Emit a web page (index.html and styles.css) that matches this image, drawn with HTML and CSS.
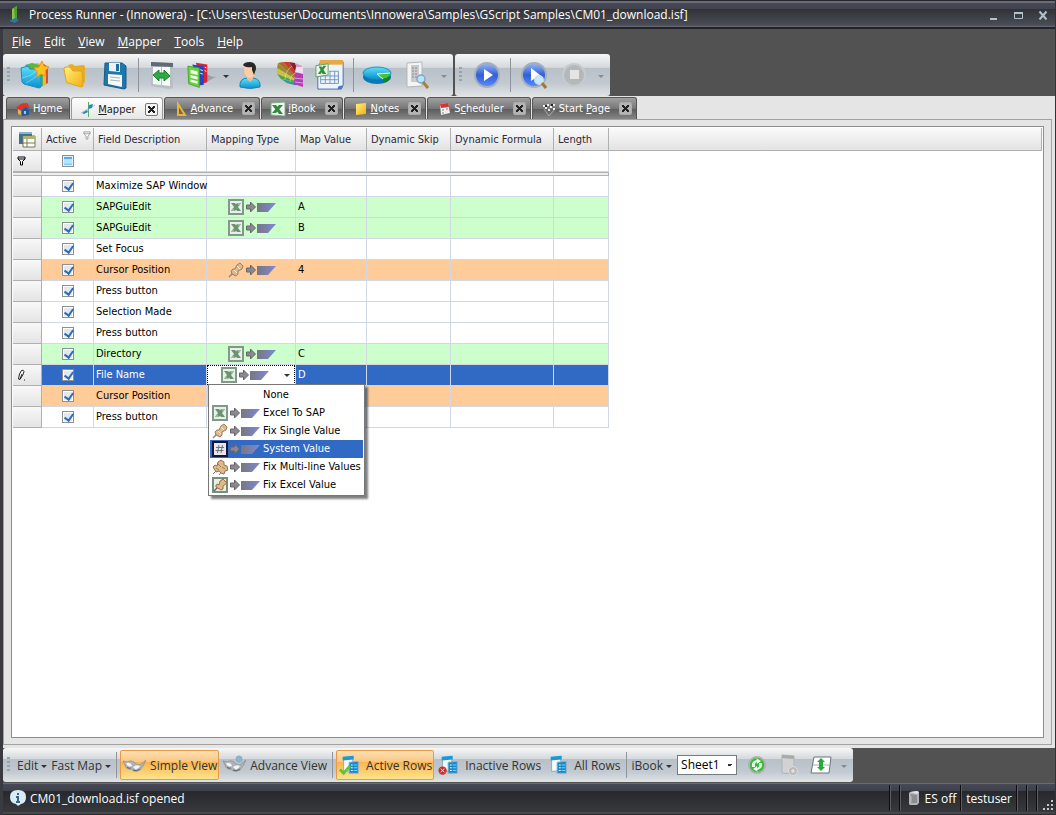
FILE: index.html
```html
<!DOCTYPE html>
<html lang="en">
<head>
    <meta charset="UTF-8">
    <meta name="viewport" content="width=device-width, initial-scale=1.0">
    <title>Process Runner</title>
    <link rel="stylesheet" href="styles.css">
</head>
<body>

<!-- shared icons -->
<svg class="sprite" aria-hidden="true">
    <defs>
        <linearGradient id="g-cyan" x1="0" y1="0" x2="0" y2="1"><stop offset="0" stop-color="#5fe0f8"/><stop offset="1" stop-color="#0b8fd0"/></linearGradient>
        <linearGradient id="g-yellow" x1="0" y1="0" x2="1" y2="1"><stop offset="0" stop-color="#fff27a"/><stop offset="1" stop-color="#f4ac14"/></linearGradient>
        <linearGradient id="g-blue" x1="0" y1="0" x2="0" y2="1"><stop offset="0" stop-color="#9db8f2"/><stop offset="0.5" stop-color="#2f5fd8"/><stop offset="1" stop-color="#5b8cff"/></linearGradient>
        <linearGradient id="g-flow" x1="0" y1="0" x2="1" y2="0"><stop offset="0" stop-color="#77777f"/><stop offset="1" stop-color="#7f88d8"/></linearGradient>
    </defs>
    <symbol id="i-flow" viewBox="0 0 32 16">
        <path d="M2.500 6h4V3l5 5-5 5v-3h-4z" fill="#8a8a8e" stroke="#66666a"/>
        <path d="M13 4h19l-8 9H13z" fill="url(#g-flow)"/>
    </symbol>
    <symbol id="i-xl" viewBox="0 0 16 16">
        <path d="M1 1h14v14H1z" fill="#e9f0e9" stroke="#82998a" stroke-width="2"/>
        <path d="M3 4h4l6 8H9zM9 4h4L7 12H3z" fill="#6a9470"/>
        <path d="M9 4h4l-2 3zM3 12h4l-2-3z" fill="#9abb9d"/>
    </symbol>
    <symbol id="i-xltab" viewBox="0 0 16 16">
        <path d="M1 2l14-1v14L1 14z" fill="#f2faf2" stroke="#7fae84"/>
        <path d="M2 4h4l7 9H9zM9 4h4l-7 8H2z" fill="#2f8a40"/>
    </symbol>
    <symbol id="i-pin" viewBox="0 0 16 16">
        <path d="M1 15l5-5" stroke="#888" stroke-width="1.500"/>
        <path d="M3 9l2-2 2 0 2-4 3-2 3 3-1 3-4 2 0 3-2 2-4-2z" fill="#dcb98e" stroke="#9c7c5c"/>
        <path d="M9 4l3 3M6 8l3 3" stroke="#fff0d6"/>
    </symbol>
    <symbol id="i-hash" viewBox="0 0 16 16">
        <path d="M1 1h14v14H1z" fill="#e8e8ec" stroke="#15153c" stroke-width="2"/>
        <path d="M7 4L5.500 12M10.500 4L9 12M4 6.500h8M3.500 9.500h8" stroke="#707078" fill="none"/>
    </symbol>
    <symbol id="i-pins" viewBox="0 0 16 16">
        <path d="M1 15l5-5M7 16l4-5" stroke="#777"/>
        <path d="M1 8l2-2 2 1 1-4 3-2 3 2v3l3 1 1 4-3 1-1 3-3-1-2-2-3 1z" fill="#e0b98a" stroke="#94714e"/>
        <path d="M6 5l3 3M10 8l3 2M4 9l3 2" stroke="#a57c50"/>
    </symbol>
    <symbol id="i-xlpin" viewBox="0 0 16 16">
        <path d="M1 1h14v14H1z" fill="#e6eee6" stroke="#74917a" stroke-width="2"/>
        <path d="M2 14l4-4" stroke="#666" stroke-width="1.500"/>
        <path d="M4 8l2-1 1 1 1-4 3-2 4 4-4 3v3l-2 1-5-3z" fill="#e0b98a" stroke="#94714e"/>
    </symbol>
    <symbol id="i-filter" viewBox="0 0 9 10">
        <path d="M1 1h7v2L5.500 5.500V9h-2V5.500L1 3z" fill="#fff" stroke="currentColor"/><path d="M1 3h7" stroke="currentColor"/>
    </symbol>
    <symbol id="i-rows" viewBox="0 0 20 20">
        <path d="M2 2l10-1v15l-10 1z" fill="#f6fbff" stroke="#8fa6b5"/>
        <path d="M1 1l12-1v4L1 5z" fill="#159bd7"/>
        <path d="M8 7l10-1v13H8z" fill="#1689c9" stroke="#8db4cc"/>
        <path d="M10 10h2M10 13h2M10 16h2" stroke="#fff"/><path d="M13 10h4M13 13h4M13 16h4" stroke="#7ed4ff"/>
    </symbol>
    <symbol id="i-glasses" viewBox="0 0 24 20">
        <path d="M1 6l4 1q5-3 9 2l4 1 6-5-3 6-3 4q-6 3-9-1-5 1-6-4z" fill="#aeb4b8" stroke="#878c90" stroke-width=".7"/>
        <path d="M4 8q5-1 6 3-4 2-6-3zM11 12q4-3 7-1-2 4-5 3z" fill="#f2f5f6"/>
        <path d="M5 12q2 2 4 1M11 15q4 2 7-1" fill="none" stroke="#5f6468"/>
    </symbol>
</svg>

<div class="window">
    <header class="titlebar">
        <svg class="logo" viewBox="0 0 10 18"><path d="M3 3l5-3v13l-5 3z" fill="#8cc63f"/><path d="M5 2l3-2v13l-2 1z" fill="#4f9c35"/><path d="M0 15l6-3 4 2-4 3z" fill="#2b76ae"/></svg>
        <h1>Process Runner - (Innowera) - [C:\Users\testuser\Documents\Innowera\Samples\GScript Samples\CM01_download.isf]</h1>
        <div class="caption">
            <button aria-label="Minimize"><svg viewBox="0 0 10 10"><path d="M2 8h7v2H2z" fill="#b4c0cc"/></svg></button>
            <button aria-label="Maximize"><svg viewBox="0 0 10 10"><path d="M1.500 2.500h8v6h-8z" fill="none" stroke="#b4c0cc"/><path d="M1 2h9v2H1z" fill="#b4c0cc"/></svg></button>
            <button aria-label="Close"><svg viewBox="0 0 10 10"><path d="M1.500 1.500l7 8M8.500 1.500l-7 8" stroke="#b4c0cc" stroke-width="2"/></svg></button>
        </div>
    </header>

    <nav class="menubar">
        <button><u>F</u>ile</button>
        <button><u>E</u>dit</button>
        <button><u>V</u>iew</button>
        <button><u>M</u>apper</button>
        <button><u>T</u>ools</button>
        <button><u>H</u>elp</button>
    </nav>

    <div class="toolbars">
        <div class="toolbar">
            <span class="grip"></span>
            <button class="tool" aria-label="New"><svg viewBox="0 0 30 30"><path d="M12 4h12l4 3v16l-4 2z" fill="#df4a32"/><path d="M9 4l9-1 8 4v18l-4 1z" fill="#f4b53c"/><path d="M5 5l7-2 11 3v20l-3 1z" fill="#58b840"/><path d="M1 8l7-2 2 3 11 0 0 18-2 1-15-4-2-2z" fill="url(#g-cyan)" stroke="#1a8ec0"/><path d="M2 18q8-1 16-8M6 23q8-4 14-10" stroke="#a9f0ff" fill="none" opacity=".5"/><path d="M22 1l2 5 5 1-4 4 1 5-5-2-4 3v-6l-3-3 5-1z" fill="#ffc21e" stroke="#e49a10"/></svg></button>
            <button class="tool" aria-label="Open"><svg viewBox="0 0 30 30"><path d="M8 5l4-1 3 2 8-1q2 0 2 3v14l-5 4z" fill="#e9ac25"/><path d="M4 9q0-2 2-2l4 0 3 4 7 0q2 0 2 2l1 12q0 2-2 2L8 23q-2 0-2-3z" fill="url(#g-yellow)" stroke="#e2a31e"/></svg></button>
            <button class="tool" aria-label="Save"><svg viewBox="0 0 30 30"><path d="M5 3l17 0 4 3 0 22-2 1L4 25z" fill="#1e77a8" stroke="#155c87"/><path d="M9 3h11v9l-11-1z" fill="#eaf0f3"/><path d="M16 4h3v7h-3z" fill="#1e6d9b"/><path d="M8 14l14 1v12L8 24z" fill="#f8f8f8"/><path d="M10 17l10 1M10 20l10 1" stroke="#a7b4bd"/></svg></button>
            <span class="sep"></span>
            <button class="tool" aria-label="Sync"><svg viewBox="0 0 30 30"><path d="M4 2l22 1v25l-4 1L4 26z" fill="#b8c0c6"/><path d="M4 2l22 1v4L4 6z" fill="#5e6b75"/><path d="M6 7l8 0v18l-8-1zM15 7h8v19l-8-1z" fill="#fafafa"/><path d="M6 15l6-5v3h5v-3l6 6-6 5v-3h-5v3z" fill="#2eac43" stroke="#19832e"/></svg></button>
            <button class="tool" aria-label="Books"><svg viewBox="0 0 34 30"><path d="M20 24l13-7-4 0-9-4z" fill="#8a9298" opacity=".7"/><path d="M10 1l13 2v20l-5 2z" fill="#d6233b"/><path d="M6 3l13 2v21l-5 1z" fill="#2446bc"/><path d="M1 5l13 2v22L2 25z" fill="#6ed03f" stroke="#3fa12c"/><path d="M4 9l8 2v4l-8-2zM4 15l8 2v3l-8-2zM4 20l8 2v3l-8-2z" fill="#f0ffeb"/><path d="M15 9l3 1M15 13l3 1M20 6l2 1M20 10l2 1" stroke="#fff"/></svg></button>
            <button class="drop" aria-label="More books"></button>
            <button class="tool" aria-label="User"><svg viewBox="0 0 30 30"><path d="M5 27q-1-9 8-9h5q8 1 7 9-9 3-20 0z" fill="url(#g-cyan)" stroke="#1587b3"/><path d="M12 15h6v4l-3 3-3-3z" fill="#f2b98e"/><path d="M9 9q0-5 5-5t6 5-2 8q-3 2-6 0-3-3-3-8z" fill="#f9cda5"/><path d="M8 5q1-3 7-3 6 0 6 7l-2 6-2-5V7q-5 1-8-1z" fill="#282829"/></svg></button>
            <button class="tool" aria-label="Colours"><svg viewBox="0 0 30 30"><path d="M28 24L2 8l1-5z" fill="#a08a30"/><path d="M28 24L3 3l5-1z" fill="#a86f24"/><path d="M28 24L8 2h6z" fill="#c43e2b"/><path d="M28 24L14 2l6 1z" fill="#8e1c30"/><path d="M28 24L20 3l7 3z" fill="#d89ab8"/><path d="M28 24L2 8v6z" fill="#c9c23e"/><path d="M28 24L2 14l4 5z" fill="#4fa53e"/><path d="M28 24L6 19l6 4z" fill="#2f9c8c"/><path d="M28 24L12 23l8 2z" fill="#2c69b2"/><path d="M20 13l8-6v20l-9-3z" fill="#b33bb6"/><path d="M21 7l7 0v7l-8-2z" fill="#f2dcf2"/><path d="M10 20Q10 11 17 6M15 22q0-7 7-10" stroke="#fff" fill="none" opacity=".4"/><path d="M19 18l9 1M20 22l8 1" stroke="#ecc6f0" opacity=".7"/></svg></button>
            <button class="tool" aria-label="Excel"><svg viewBox="0 0 32 32"><path d="M6 2h24v25l-2 4H3V8z" fill="#eef4fb" stroke="#466cae"/><path d="M5 0h25v5H5z" fill="#e9a848"/><path d="M30 27l-5 1-1 3h4z" fill="#4b78c4"/><path d="M6 17h19v8H6zM6 21h19M11 17v8M16 12v13M21 12v13M15 12h10v8" fill="none" stroke="#7594c2"/><path d="M1 6l13-2v12L1 18z" fill="#ecf5ea" stroke="#629c5e"/><path d="M4 7h3l5 8H8zM9 6h3l-6 9H3z" fill="#30933c"/></svg></button>
            <span class="sep"></span>
            <button class="tool" aria-label="Chart"><svg viewBox="0 0 30 30"><ellipse cx="15" cy="17" rx="14" ry="7" fill="#087ab5"/><ellipse cx="15" cy="13" rx="14" ry="6" fill="url(#g-cyan)" stroke="#1a95c8"/><path d="M15 14l13-1q1 4-7 6z" fill="#45c52e"/><path d="M21 19q8-2 7-6v4q0 4-7 6z" fill="#14851f"/><path d="M15 14l13-1M15 14l6 5" stroke="#d8ffd8"/></svg></button>
            <button class="tool" aria-label="Preview"><svg viewBox="0 0 30 30"><path d="M5 3l15-1v24L5 27z" fill="#f4f4f4" stroke="#b3b7b9"/><path d="M9 5h8v17H9z" fill="#c9cccf"/><path d="M10 8h6M10 11h6M10 14h6M10 17h6" stroke="#85898c" stroke-dasharray="2 1"/><circle cx="19" cy="19" r="4" fill="#b7e4fa" stroke="#7fa7c7" stroke-width="1.500"/><path d="M21 22l5 6" stroke="#a58045" stroke-width="3"/></svg></button>
            <button class="drop dim" aria-label="Toolbar options"></button>
        </div>
        <div class="toolbar">
            <span class="grip"></span>
            <button class="tool" aria-label="Run"><svg viewBox="0 0 30 30"><circle cx="15" cy="15" r="12" fill="url(#g-blue)" stroke="#a6afb9" stroke-width="2"/><path d="M12 9l9 6-9 6z" fill="#fff"/></svg></button>
            <span class="sep"></span>
            <button class="tool" aria-label="Run and inspect"><svg viewBox="0 0 30 30"><circle cx="15" cy="15" r="12" fill="url(#g-blue)" stroke="#a6afb9" stroke-width="2"/><path d="M12 8l9 7-9 6z" fill="#fff"/><circle cx="20" cy="20" r="4" fill="#bfeaff" stroke="#d2dfe7" stroke-width="2"/><path d="M23 23l4 5" stroke="#9e7843" stroke-width="3"/></svg></button>
            <button class="tool" aria-label="Stop" disabled><svg viewBox="0 0 30 30"><circle cx="15" cy="15" r="11" fill="#b5b8ba" stroke="#c8cbcd" stroke-width="2"/><path d="M11 10h9v9h-9z" fill="#e4e4e4"/></svg></button>
            <button class="drop dim" aria-label="Toolbar options"></button>
        </div>
    </div>

    <div class="tabs" role="tablist">
        <div class="tab">
            <button role="tab"><svg viewBox="0 0 16 16"><path d="M2 6l6-4 6 3v7l-6 3-6-3z" fill="#3276c4"/><path d="M1 7l5-4 6-1 3 5-5-1-4 3z" fill="#df3323"/><path d="M7 9l4-3 3 3v5l-7 1z" fill="#275790"/><path d="M3 8l3 2v4l-3-1z" fill="#e8b34c"/><path d="M9 10h2v3H9z" fill="#9cc4e8"/></svg><span>H<u>o</u>me</span></button>
        </div>
        <div class="tab active">
            <button role="tab" aria-selected="true"><svg viewBox="0 0 16 16"><path d="M8.500 1v15" stroke="#58ad63"/><path d="M1 12L15 4" stroke="#a5c9bd"/><path d="M9 4l4-1-1 4-4 1zM2 12l5-3 1 2-4 2z" fill="#2d87bd"/></svg><span><u>M</u>apper</span></button>
            <button class="close" aria-label="Close Mapper"></button>
        </div>
        <div class="tab">
            <button role="tab"><svg viewBox="0 0 16 16"><path d="M5 3v11h7z" fill="none" stroke="#e9b437" stroke-width="2"/></svg><span><u>A</u>dvance</span></button>
            <button class="close" aria-label="Close Advance"></button>
        </div>
        <div class="tab">
            <button role="tab"><svg viewBox="0 0 16 16"><use href="#i-xltab"/></svg><span><u>i</u>Book</span></button>
            <button class="close" aria-label="Close iBook"></button>
        </div>
        <div class="tab">
            <button role="tab"><svg viewBox="0 0 16 16"><path d="M3 3l10-1v11l-10 1z" fill="url(#g-yellow)"/></svg><span><u>N</u>otes</span></button>
            <button class="close" aria-label="Close Notes"></button>
        </div>
        <div class="tab">
            <button role="tab"><svg viewBox="0 0 16 16"><path d="M4 3l8-1 2 10-9 2z" fill="#f0eeee"/><path d="M4 3l8-1 1 4-8 1z" fill="#d33434"/><path d="M6 9h2M10 8h2M6 12h2" stroke="#878787"/></svg><span>S<u>c</u>heduler</span></button>
            <button class="close" aria-label="Close Scheduler"></button>
        </div>
        <div class="tab">
            <button role="tab"><svg viewBox="0 0 16 16"><path d="M2 4h2v2H2zM6 3h2v2H6zM4 6h2v2H4zM9 5h2v2H9zM12 3h2v2h-2zM7 8h2v2H7zM12 7h2v2h-2z" fill="#eee"/><path d="M4 4h2v2H4zM10 3h2v2h-2z" fill="#222"/><path d="M3 8l5 7M13 9l-5 6" stroke="#aaa"/></svg><span>Start <u>P</u>age</span></button>
            <button class="close" aria-label="Close Start Page"></button>
        </div>
    </div>

    <main class="panel">
        <div class="sheet">
            <table class="grid">
                <colgroup><col class="c-mark"><col class="c-active"><col class="c-field"><col class="c-type"><col class="c-value"><col class="c-skip"><col class="c-formula"><col class="c-length"><col></colgroup>
                <thead>
                    <tr>
                        <th class="corner"><svg class="chooser" viewBox="0 0 18 17"><path d="M1 1h13v12H1z" fill="#3e6f94"/><path d="M1 1h13v2H1z" fill="#89b4cc"/><path d="M5 5h12v11H5z" fill="#fff" stroke="#777b55"/><path d="M5 5h12v3H5z" fill="#b0b46a"/><path d="M5 12h12M9 8v8" stroke="#777b55"/></svg></th>
                        <th>Active<svg class="funnel" viewBox="0 0 9 10"><use href="#i-filter"/></svg></th>
                        <th>Field Description</th>
                        <th>Mapping Type</th>
                        <th>Map Value</th>
                        <th>Dynamic Skip</th>
                        <th>Dynamic Formula</th>
                        <th>Length</th>
                        <th class="rest"></th>
                    </tr>
                </thead>
                <tbody>
                    <tr class="filter-row"><td class="mark"><svg class="mark-filter" viewBox="0 0 9 10"><use href="#i-filter"/></svg></td><td class="check"><input type="checkbox" class="mixed" aria-label="Filter active"></td><td></td><td></td><td></td><td></td><td></td><td></td><td class="rest"></td></tr>
                    <tr class="divider"><td colspan="8"></td><td class="rest"></td></tr>
                    <tr><td class="mark"></td><td class="check"><input type="checkbox" aria-label="Active" checked></td><td>Maximize SAP Window</td><td></td><td></td><td></td><td></td><td></td><td class="rest"></td></tr>
                    <tr class="green"><td class="mark"></td><td class="check"><input type="checkbox" aria-label="Active" checked></td><td>SAPGuiEdit</td><td class="type"><span class="map"><svg><use href="#i-xl"/></svg><svg class="flow"><use href="#i-flow"/></svg></span></td><td>A</td><td></td><td></td><td></td><td class="rest"></td></tr>
                    <tr class="green"><td class="mark"></td><td class="check"><input type="checkbox" aria-label="Active" checked></td><td>SAPGuiEdit</td><td class="type"><span class="map"><svg><use href="#i-xl"/></svg><svg class="flow"><use href="#i-flow"/></svg></span></td><td>B</td><td></td><td></td><td></td><td class="rest"></td></tr>
                    <tr><td class="mark"></td><td class="check"><input type="checkbox" aria-label="Active" checked></td><td>Set Focus</td><td></td><td></td><td></td><td></td><td></td><td class="rest"></td></tr>
                    <tr class="orange"><td class="mark"></td><td class="check"><input type="checkbox" aria-label="Active" checked></td><td>Cursor Position</td><td class="type"><span class="map"><svg><use href="#i-pin"/></svg><svg class="flow"><use href="#i-flow"/></svg></span></td><td>4</td><td></td><td></td><td></td><td class="rest"></td></tr>
                    <tr><td class="mark"></td><td class="check"><input type="checkbox" aria-label="Active" checked></td><td>Press button</td><td></td><td></td><td></td><td></td><td></td><td class="rest"></td></tr>
                    <tr><td class="mark"></td><td class="check"><input type="checkbox" aria-label="Active" checked></td><td>Selection Made</td><td></td><td></td><td></td><td></td><td></td><td class="rest"></td></tr>
                    <tr><td class="mark"></td><td class="check"><input type="checkbox" aria-label="Active" checked></td><td>Press button</td><td></td><td></td><td></td><td></td><td></td><td class="rest"></td></tr>
                    <tr class="green"><td class="mark"></td><td class="check"><input type="checkbox" aria-label="Active" checked></td><td>Directory</td><td class="type"><span class="map"><svg><use href="#i-xl"/></svg><svg class="flow"><use href="#i-flow"/></svg></span></td><td>C</td><td></td><td></td><td></td><td class="rest"></td></tr>
                    <tr class="selected">
                        <td class="mark"><svg class="pencil" viewBox="0 0 9 12"><path d="M1.500 10l1-5 2-3.500q2-1 2.500 1l-1 3-3 5zM3 10l2-5" fill="#fff" stroke="#222"/><path d="M7 11h1" stroke="#222"/></svg></td>
                        <td class="check"><input type="checkbox" aria-label="Active" checked></td>
                        <td>File Name</td>
                        <td class="type editing">
                            <button class="editor" aria-haspopup="listbox" aria-expanded="true" aria-label="Mapping type"><span class="map"><svg><use href="#i-xl"/></svg><svg class="flow"><use href="#i-flow"/></svg></span></button>
                            <ul class="popup" role="listbox">
                                <li role="option"><span class="map"></span>None</li>
                                <li role="option"><span class="map"><svg><use href="#i-xl"/></svg><svg class="flow"><use href="#i-flow"/></svg></span>Excel To SAP</li>
                                <li role="option"><span class="map"><svg><use href="#i-pin"/></svg><svg class="flow"><use href="#i-flow"/></svg></span>Fix Single Value</li>
                                <li role="option" aria-selected="true"><span class="map"><svg><use href="#i-hash"/></svg><svg class="flow"><use href="#i-flow"/></svg></span>System Value</li>
                                <li role="option"><span class="map"><svg><use href="#i-pins"/></svg><svg class="flow"><use href="#i-flow"/></svg></span>Fix Multi-line Values</li>
                                <li role="option"><span class="map"><svg><use href="#i-xlpin"/></svg><svg class="flow"><use href="#i-flow"/></svg></span>Fix Excel Value</li>
                            </ul>
                        </td>
                        <td>D</td><td></td><td></td><td></td><td class="rest"></td>
                    </tr>
                    <tr class="orange"><td class="mark"></td><td class="check"><input type="checkbox" aria-label="Active" checked></td><td>Cursor Position</td><td></td><td></td><td></td><td></td><td></td><td class="rest"></td></tr>
                    <tr><td class="mark"></td><td class="check"><input type="checkbox" aria-label="Active" checked></td><td>Press button</td><td></td><td></td><td></td><td></td><td></td><td class="rest"></td></tr>
                </tbody>
            </table>
        </div>
    </main>

    <div class="bottombar">
        <div class="toolbar viewbar">
            <span class="grip"></span>
            <button class="text">Edit<i class="caret"></i></button>
            <button class="text">Fast Map<i class="caret"></i></button>
            <span class="sep"></span>
            <button class="view on"><svg class="wide" viewBox="0 0 24 20"><use href="#i-glasses"/></svg>Simple View</button>
            <button class="view"><svg class="wide" viewBox="0 0 24 20"><use href="#i-glasses"/><circle cx="17" cy="4" r="3" fill="#7fb9dc" stroke="#9aa"/></svg>Advance View</button>
            <span class="sep"></span>
            <button class="view on"><svg class="wide" viewBox="0 0 24 24"><use href="#i-rows" x="3" y="1" width="20" height="22"/><path d="M1 17l4 4 7-8" fill="none" stroke="#58c63a" stroke-width="3"/></svg>Active Rows</button>
            <button class="view"><svg class="wide" viewBox="0 0 24 24"><use href="#i-rows" x="3" y="1" width="20" height="22"/><circle cx="5" cy="18" r="4.500" fill="#d52b2b"/><path d="M3 16l4 4M7 16l-4 4" stroke="#fff"/></svg>Inactive Rows</button>
            <button class="view"><svg class="wide" viewBox="0 0 24 24"><use href="#i-rows" x="3" y="1" width="20" height="22"/></svg>All Rows</button>
            <span class="sep"></span>
            <button class="text">iBook<i class="caret"></i></button>
            <select class="sheet-select" aria-label="Sheet"><option>Sheet1</option></select>
            <button class="mini" aria-label="Refresh"><svg viewBox="0 0 22 22"><circle cx="11" cy="11" r="8" fill="#2ebd36" stroke="#a9b3ab" stroke-width="2"/><path d="M6 13q-1-6 5-7l-1-2 5 3-4 3v-2q-3 1-2 5zM16 9q1 6-5 7l1 2-5-3 4-3v2q3-1 2-5z" fill="#f2fff0"/></svg></button>
            <button class="mini" aria-label="Sheet settings" disabled><svg viewBox="0 0 22 22"><path d="M4 1l12 1v18l-12-1z" fill="#d0d2d3" stroke="#b0b3b5"/><path d="M4 1l12 1v3L4 4z" fill="#aaa"/><circle cx="15" cy="17" r="4.500" fill="#bbb" stroke="#ddd"/><path d="M13 17h4M15 15v4" stroke="#eee"/></svg></button>
            <button class="mini" aria-label="Fit rows"><svg viewBox="0 0 22 22"><path d="M4 3h17l-2 16H1z" fill="#fff" stroke="#697781"/><path d="M3 11h17" stroke="#a9b1b7"/><path d="M11 4l4 4h-2v5h2l-4 4-4-4h2V8H7z" fill="#29a83b"/></svg></button>
            <button class="drop dim" aria-label="Toolbar options"></button>
        </div>
    </div>

    <footer class="statusbar">
        <svg class="info" viewBox="0 0 16 16"><path d="M8 0q8 0 8 7 0 6-5 7l-3 2-2-2Q0 13 0 7q0-7 8-7z" fill="#d8ecf8"/><path d="M7 3h2v2H7zM6 6h3v5h1v2H6v-2h1V8H6z" fill="#3f6387"/></svg>
        <span class="message">CM01_download.isf opened</span>
        <span class="cell gap"></span>
        <span class="cell"><svg class="server" viewBox="0 0 12 14"><path d="M2 1l7-1 2 1v11l-2 2H2l-1-1V2z" fill="#b2b4b6"/><path d="M2 3q3 4 1 9h6V4z" fill="#8b8d8f"/><path d="M2 1l7-1 2 1-2 2z" fill="#e2e3e4"/></svg>ES off</span>
        <span class="cell">testuser</span>
        <span class="cell gap"></span>
        <span class="cell gap"></span>
        <span class="cell resize"><svg viewBox="0 0 12 12"><path d="M9 1h2v2H9zM5 5h2v2H5zM9 5h2v2H9zM1 9h2v2H1zM5 9h2v2H5zM9 9h2v2H9z" fill="#c8c8ca"/></svg></span>
    </footer>
</div>

</body>
</html>
```
FILE: styles.css
```css
* {
    box-sizing: border-box;
}

body {
    margin: 0;
    font-family: "Open Sans", "Noto Sans", sans-serif;
    font-size: 12px;
    background-color: #525252;
}

button {
    font: inherit;
    color: inherit;
    background: none;
    border: none;
    padding: 0;
    margin: 0;
}

svg {
    display: block;
    flex: none;
}

.sprite {
    position: absolute;
    width: 0;
    height: 0;
}

.window {
    display: flex;
    flex-direction: column;
    min-height: 100vh;
    background-color: #525252;
    border-left: 3px solid #3a3b40;
    border-right: 1px solid #303136;
}

/* title + menu */
.titlebar {
    display: flex;
    align-items: center;
    height: 29px;
    margin-left: -3px;
    padding: 0 7px 0 9px;
    color: #fff;
    background: linear-gradient(#26272c 0 1px, #6a6c76 1px 3px, #464955 3px, #41444e 9px, #303236 9px, #494c55 25px, #686b75 27px, #232429 27px);
}

.titlebar h1 {
    flex: 1;
    margin: 0 0 0 10px;
    font-size: 12px;
    font-weight: normal;
    white-space: nowrap;
}

.logo {
    width: 10px;
    height: 18px;
}

.caption {
    display: flex;
    gap: 15px;
}

.caption svg {
    width: 10px;
    height: 10px;
}

.menubar {
    display: flex;
    gap: 13px;
    height: 25px;
    padding: 0 9px;
    color: #fff;
}

/* toolbars */
.toolbars {
    display: flex;
    gap: 2px;
}

.toolbar {
    display: flex;
    align-items: center;
    height: 42px;
    padding: 0 2px 0 4px;
    border-radius: 3px;
    background: linear-gradient(#f6f7f7, #d5d9dd 32%, #b8c0c8 33%, #c2c9d0 70%, #e0e4e6);
}

.grip {
    width: 3px;
    height: 16px;
    margin-right: 5px;
    background: repeating-linear-gradient(#9aa2aa 0 2px, transparent 2px 4px);
}

.sep {
    width: 1px;
    height: 34px;
    margin: 0 3px;
    background-color: #8e959c;
}

.tool svg {
    width: 30px;
    height: 30px;
    margin: 0 5px;
}

.drop {
    width: 8px;
    height: 30px;
}

.drop.dim {
    width: 14px;
}

.drop::before,
.caret {
    content: "";
    display: inline-block;
    border: 3px solid transparent;
    border-top-color: #333;
    border-bottom: none;
    vertical-align: middle;
}

.drop.dim::before {
    border-top-color: #7e8c9b;
}

/* tabs */
.tabs {
    display: flex;
    gap: 1px;
    height: 23px;
    padding: 1px 3px 0;
    background-color: #e5e5e5;
}

.tab {
    display: flex;
    align-items: center;
    justify-content: space-between;
    gap: 8px;
    padding: 0 4px 0 8px;
    font-family: "DejaVu Sans Condensed", "Liberation Sans", sans-serif;
    font-size: 11px;
    color: #fff;
    border: 1px solid #555;
    border-bottom: none;
    border-radius: 3px 3px 0 0;
    background: linear-gradient(#a0a0a0, #777 50%, #5c5c5c 51%, #858585);
}

.tab button[role="tab"] {
    display: flex;
    align-items: center;
    gap: 2px;
    padding-right: 1px;
    white-space: nowrap;
}

.tab:first-child {
    padding-right: 6px;
}

.tab svg {
    width: 16px;
    height: 16px;
}

.tab.active {
    color: #222;
    margin-bottom: -1px;
    border-color: #999;
    background: linear-gradient(#fff, #e5e5e5);
}

.tab .close {
    width: 13px;
    height: 13px;
    border-radius: 2px;
    border: 1px solid #aaa;
    background:
        linear-gradient(45deg, transparent 42%, #222 42% 58%, transparent 58%) center / 7px 7px no-repeat,
        linear-gradient(-45deg, transparent 42%, #222 42% 58%, transparent 58%) center / 7px 7px no-repeat,
        #b4b4b4;
}

.tab.active .close {
    background-color: #f4f4f4;
    border-color: #777;
}

/* grid */
.panel {
    flex: 1;
    display: flex;
    margin: 0 3px 3px 0;
    padding: 6px 7px;
    border: 1px solid #a2a2a2;
    background-color: #e5e5e5;
    box-shadow: 0 0 0 3px #e5e5e5;
    clip-path: inset(0 -3px -3px 0);
}

.sheet {
    flex: 1;
    padding: 1px;
    border: 1px solid #8e8e8e;
    background-color: #fff;
}

.grid {
    width: 100%;
    table-layout: fixed;
    border-collapse: separate;
    border-spacing: 0;
    font-family: "DejaVu Sans Condensed", "Liberation Sans", sans-serif;
    font-size: 11px;
    line-height: 16px;
    color: #000;
}

.c-mark { width: 29px; }
.c-active { width: 52px; }
.c-field { width: 113px; }
.c-type { width: 89px; }
.c-value { width: 71px; }
.c-skip { width: 84px; }
.c-formula { width: 103px; }
.c-length { width: 55px; }

.grid th {
    position: relative;
    height: 23px;
    padding: 2px 4px 0;
    text-align: left;
    font-weight: normal;
    white-space: nowrap;
    color: #2a2a3a;
    border-right: 1px solid #b0b0b0;
    border-bottom: 1px solid #b0b0b0;
    background: linear-gradient(#fafafa, #e3e3e3);
}

.grid td {
    height: 21px;
    padding: 0 0 0 2px;
    white-space: nowrap;
    border-right: 1px solid #d0d7e5;
    border-bottom: 1px solid #d0d7e5;
}

.grid td.mark {
    border-color: #b0b0b0;
    background: linear-gradient(#f8f8f8, #e4e4e4);
}

.grid td.check {
    padding: 0 2px;
}

.grid td.rest {
    border: none;
    background-color: #fff;
}

.grid .divider td {
    height: 4px;
    padding: 0;
    border: 1px solid #b0b0b0;
    border-left: none;
    background-color: #eee;
}

.grid .divider td.rest {
    border: none;
    background-color: #fff;
}

.green td {
    background-color: #cfc;
}

.orange td {
    background-color: #fc9;
}

.selected td {
    color: #fff;
    background-color: #316ac5;
}

.grid .corner {
    padding: 0 5px;
}

.chooser {
    width: 18px;
    height: 17px;
}

.funnel {
    position: absolute;
    top: 3px;
    right: 2px;
    width: 8px;
    height: 9px;
    color: #999;
}

.mark-filter {
    width: 9px;
    height: 10px;
    margin-left: 2px;
}

.pencil {
    width: 9px;
    height: 12px;
    margin-left: 2px;
}

.check input {
    appearance: none;
    display: block;
    width: 12px;
    height: 12px;
    margin: 0 auto;
    border: 1px solid #8b8f94;
    background-color: #e4e8ec;
    box-shadow: inset 0 0 0 1px #fff;
}

.check input:checked::before {
    content: "";
    display: block;
    width: 4px;
    height: 7px;
    margin: 0 3px;
    border: solid #2a6dbb;
    border-width: 0 2px 2px 0;
    transform: rotate(35deg);
}

.check input.mixed {
    background: linear-gradient(#55aaf0 0 3px, #b3e4ff 3px 7px, #55aaf0);
    box-shadow: inset 0 0 0 1px #e0f0fc;
}

.map {
    display: flex;
    align-items: center;
    width: 48px;
    height: 16px;
}

.map svg {
    width: 16px;
    height: 16px;
}

.map .flow {
    width: 32px;
}

.type .map {
    margin: 0 auto;
}

.grid td.editing {
    position: relative;
    padding: 0;
    background-color: #fff;
}

.editor {
    display: flex;
    align-items: center;
    justify-content: space-between;
    width: 100%;
    height: 20px;
    padding: 0 4px 0 13px;
    border: 1px dotted #000;
}

.editor .map {
    margin: 0;
}

.editor::after {
    content: "";
    border: 3px solid transparent;
    border-top-color: #333;
    border-bottom: none;
}

.popup {
    position: absolute;
    top: 19px;
    left: 1px;
    z-index: 1;
    margin: 0;
    padding: 1px;
    list-style: none;
    min-width: 154px;
    color: #000;
    border: 1px solid #777;
    background-color: #fff;
    box-shadow: 3px 3px 2px rgba(0, 0, 0, 0.5);
}

.popup li {
    display: flex;
    align-items: center;
    gap: 3px;
    height: 18px;
    padding: 0 2px;
}

.popup li[aria-selected="true"] {
    color: #fff;
    background-color: #316ac5;
}

.popup .map {
    margin: 0;
}

/* bottom */
.bottombar {
    display: flex;
    padding-bottom: 1px;
}

.viewbar {
    height: 34px;
    color: #333;
}

.viewbar .sep {
    height: 26px;
}

.text {
    padding: 0 2px;
    white-space: nowrap;
}

.caret {
    margin-left: 3px;
}

.view {
    display: flex;
    align-items: center;
    gap: 4px;
    height: 30px;
    padding: 0 1px;
    border: 1px solid transparent;
    border-radius: 2px;
    white-space: nowrap;
}

.view + .view {
    margin-left: 1px;
}

.view .wide {
    width: 24px;
    height: 22px;
}

.view.on {
    border-color: #e79a45;
    background: linear-gradient(#fce0b4, #fbc682 38%, #f9b350 39%, #fde48c);
}

.sheet-select {
    appearance: none;
    width: 60px;
    height: 20px;
    margin: 0 4px 0 3px;
    padding: 0 3px;
    font: inherit;
    font-size: 12px;
    line-height: 16px;
    color: #000;
    border: 1px solid #767b80;
    border-radius: 0;
    background:
        linear-gradient(to bottom left, #333 50%, transparent 50%) right 6px center / 3px 3px no-repeat,
        linear-gradient(to bottom right, #333 50%, transparent 50%) right 3px center / 3px 3px no-repeat,
        #fff;
}

.mini {
    padding: 0 5px;
}

.mini svg {
    width: 22px;
    height: 22px;
}

.statusbar {
    display: flex;
    align-items: center;
    height: 32px;
    padding: 0 0 2px 7px;
    color: #fff;
    background: linear-gradient(#686b75 0 1px, #474a56 1px, #3e414b 8px, #26282b 8px, #37393e 29px, #5a5c62 30px, #2c2d31 31px);
}

.info {
    width: 16px;
    height: 16px;
}

.message {
    flex: 1;
    padding-left: 4px;
}

.cell {
    display: flex;
    align-items: center;
    gap: 5px;
    height: 26px;
    padding: 0 4px;
    border-left: 2px groove #5a5c64;
}

.cell.resize {
    align-items: flex-end;
    padding: 0 1px 0 4px;
}

.server {
    width: 12px;
    height: 14px;
    margin-left: 3px;
}

.resize svg {
    width: 12px;
    height: 12px;
}
```
